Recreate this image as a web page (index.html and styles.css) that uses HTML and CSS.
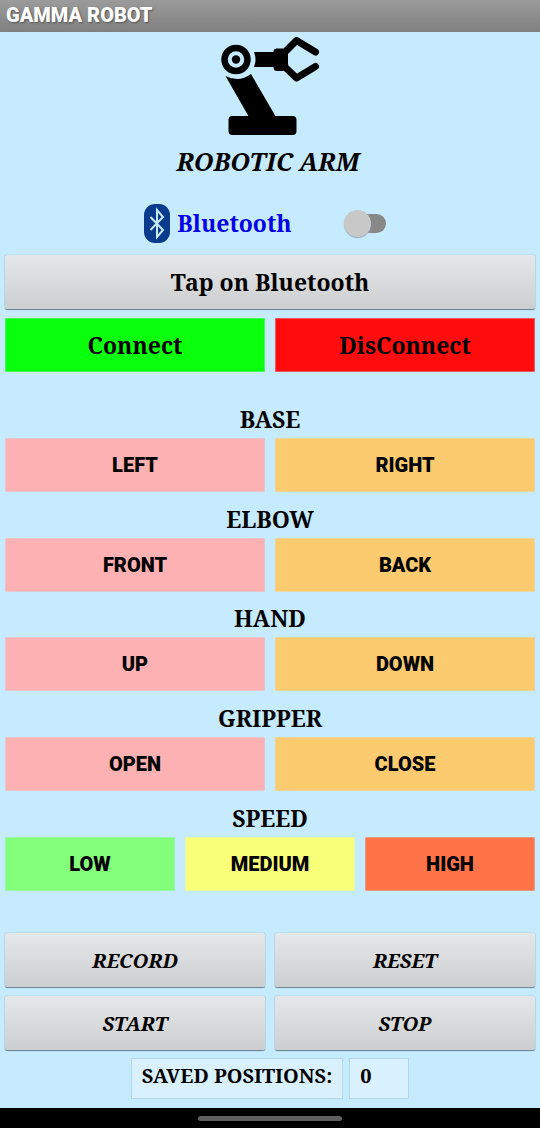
FILE: index.html
```html
<!DOCTYPE html>
<html lang="en">
<head>
<meta charset="utf-8">
<meta name="viewport" content="width=device-width, initial-scale=1">
<title>GAMMA ROBOT</title>
<link rel="stylesheet" href="styles.css">
</head>
<body>
<header class="titlebar"><h1 class="titlebar-text">GAMMA ROBOT</h1></header>
<main class="screen">
  <div class="brand">
    <svg class="arm" viewBox="0 0 100 100" aria-hidden="true">
      <circle cx="16" cy="23.500" r="11.500" fill="none" stroke="#000" stroke-width="6.500"/>
      <circle cx="16" cy="23.500" r="4.200"/>
      <path d="M5.500 40Q19 47 31 38L56 81H29Z"/>
      <rect x="8.500" y="80" width="68" height="19" rx="4"/>
      <path d="M34 16H53.500V15Q54 12.500 57 12.500H63L68 16V31L63 35H57Q54 35 53.500 32V31H34Q37 23.500 34 16Z"/>
      <path d="M65 16L76.500 4.500L95.500 16M95.500 30.500L76.500 42L65 31L63 18" fill="none" stroke="#000" stroke-width="7" stroke-linecap="round" stroke-linejoin="round"/>
    </svg>
    <h2 class="brand-name">ROBOTIC ARM</h2>
  </div>
  <div class="bluetooth">
    <label class="bluetooth-label" for="bt">
      <svg class="bt-icon" viewBox="0 0 26 39" aria-hidden="true">
        <rect width="26" height="39" rx="11" fill="#0b3b8c"/>
        <path d="M6.500 13L19 26L13 33V6L19 13L6.500 26" fill="none" stroke="#c6ebff" stroke-width="2"/>
      </svg>
      Bluetooth
    </label>
    <input class="switch" id="bt" type="checkbox" role="switch">
  </div>
  <div class="connection">
    <button class="btn plain large wide">Tap on Bluetooth</button>
    <button class="btn large green">Connect</button>
    <button class="btn large red">DisConnect</button>
  </div>
  <div class="controls">
    <section class="joint"><h3 class="joint-name">BASE</h3><div class="row"><button class="btn tech pink">LEFT</button><button class="btn tech orange">RIGHT</button></div></section>
    <section class="joint"><h3 class="joint-name">ELBOW</h3><div class="row"><button class="btn tech pink">FRONT</button><button class="btn tech orange">BACK</button></div></section>
    <section class="joint"><h3 class="joint-name">HAND</h3><div class="row"><button class="btn tech pink">UP</button><button class="btn tech orange">DOWN</button></div></section>
    <section class="joint"><h3 class="joint-name">GRIPPER</h3><div class="row"><button class="btn tech pink">OPEN</button><button class="btn tech orange">CLOSE</button></div></section>
    <section class="joint"><h3 class="joint-name">SPEED</h3><div class="row"><button class="btn tech lime">LOW</button><button class="btn tech yellow">MEDIUM</button><button class="btn tech coral">HIGH</button></div></section>
  </div>
  <div class="program">
    <button class="btn plain slanted">RECORD</button>
    <button class="btn plain slanted">RESET</button>
    <button class="btn plain slanted">START</button>
    <button class="btn plain slanted">STOP</button>
  </div>
  <div class="saved">
    <label class="field" for="count">SAVED POSITIONS:</label>
    <input class="field count" id="count" type="text" value="0" readonly>
  </div>
</main>
<footer class="navbar"><div class="handle"></div></footer>
</body>
</html>
```
FILE: styles.css
```css
* { box-sizing: border-box; }
body {
  margin: 0;
  min-height: 100vh;
  display: flex;
  flex-direction: column;
  background: #c6ebff;
  color: #000;
  font-family: "Noto Serif", "Droid Serif", "DejaVu Serif Condensed", "DejaVu Serif", serif;
  font-weight: 700;
}
h1, h2, h3 { margin: 0; }
.titlebar {
  height: 32px;
  padding: 0 6px;
  background: linear-gradient(#9b9b9b, #808080);
}
.titlebar-text {
  color: #fff;
  font: 900 20px/30px Roboto, sans-serif;
  text-shadow: 1px 1px 2px #555;
}
.screen {
  flex: 1;
  display: flex;
  flex-direction: column;
  padding: 4px 5px 9px;
}
.brand {
  display: flex;
  flex-direction: column;
  align-items: center;
}
.arm { width: 100px; height: 100px; }
.brand-name {
  font-size: 25px;
  line-height: 32px;
  margin-top: 9px;
  margin-right: 4px;
  font-style: italic;
}
.bluetooth {
  display: flex;
  justify-content: center;
  align-items: center;
  gap: 52px;
  height: 40px;
  margin: 26px 10px 12px 0;
}
.bluetooth-label {
  display: flex;
  align-items: center;
  gap: 7px;
  color: #0000e6;
  font-size: 23px;
}
.bt-icon { width: 26px; height: 39px; }
.switch {
  appearance: none;
  width: 42px;
  height: 28px;
  margin: 0;
  display: flex;
  align-items: center;
}
.switch::before {
  content: "";
  width: 27px;
  height: 27px;
  border-radius: 50%;
  background: #c8c8c8;
  box-shadow: 0 1px 1px #9ab;
  z-index: 1;
}
.switch::after {
  content: "";
  width: 34px;
  height: 19px;
  margin-left: -19px;
  border-radius: 10px;
  background: #888;
}
.connection, .program {
  display: grid;
  grid-template-columns: 1fr 1fr;
  gap: 9px 10px;
}
.wide { grid-column: 1 / -1; }
.row {
  display: grid;
  grid-auto-flow: column;
  grid-auto-columns: 1fr;
  gap: 10px;
}
.btn {
  height: 54px;
  padding: 0;
  border: 1px solid #c6ebff55;
  border-radius: 1px;
  color: #000;
  font-family: inherit;
  font-weight: 700;
  font-size: 20px;
}
.large { font-size: 23px; }
.plain {
  border: 0;
  background: linear-gradient(#e6e7e8, #cdcecf);
  border-radius: 2px;
  box-shadow: 0 0 1px #68808f, 0 1px 1px #68808f;
}
.slanted { font-style: italic; }
.tech { font-family: Roboto, sans-serif; font-weight: 900; }
.green { background: #0aff0c; }
.red { background: #ff0c0c; }
.pink { background: #fdb1b3; }
.orange { background: #fccb6f; }
.lime { background: #83ff7c; }
.yellow { background: #f9ff79; }
.coral { background: #ff7348; }
.controls {
  flex: 1;
  display: flex;
  flex-direction: column;
  margin: 20px 0 42px;
}
.joint {
  flex: 1;
  display: flex;
  flex-direction: column;
  justify-content: flex-end;
}
.joint-name {
  margin-bottom: 5px;
  text-align: center;
  font-size: 23px;
  line-height: 28px;
}
.saved {
  display: flex;
  justify-content: center;
  gap: 6px;
  margin-top: 8px;
}
.field {
  height: 41px;
  padding: 0 10px 6px;
  border: 1px solid #b5d7e9;
  background: #d9f1ff;
  color: #000;
  font: inherit;
  font-size: 20px;
  line-height: 34px;
}
.count { width: 60px; }
.navbar {
  height: 20px;
  display: flex;
  justify-content: center;
  align-items: center;
  background: #000;
}
.handle {
  width: 144px;
  height: 5px;
  border-radius: 3px;
  background: #606060;
}
```
